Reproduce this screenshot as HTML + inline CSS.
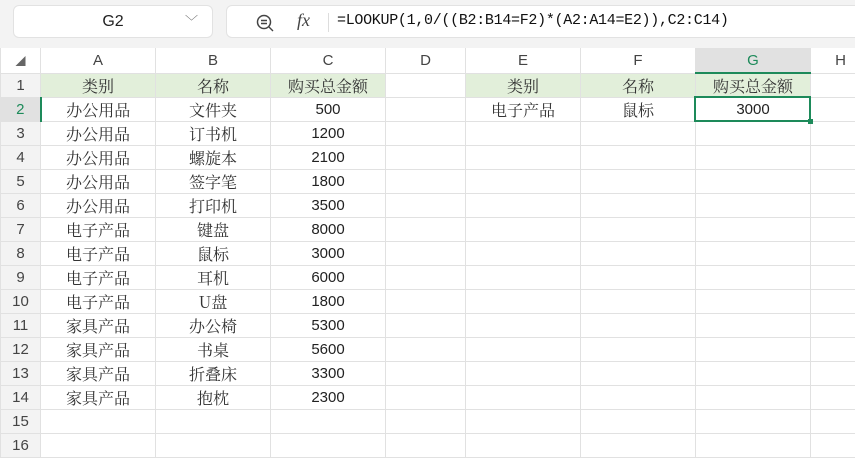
<!DOCTYPE html><html><head><meta charset="utf-8"><style>
body{margin:0;width:855px;height:446px;overflow:hidden;background:#fff;font-family:"Liberation Sans","Noto Serif CJK SC",sans-serif;position:relative}
.tb{position:absolute;left:0;top:0;width:855px;height:48px;background:#f3f3f3}
.nb{position:absolute;left:13px;top:5px;width:200px;height:33px;background:#fff;border:1px solid #e2e2e2;border-radius:6px;box-sizing:border-box;font-size:16px;line-height:31px;text-align:center;color:#222}
.nb span{position:absolute;right:14px;top:0;color:#666;font-size:13px}
.fb{position:absolute;left:226px;top:5px;width:640px;height:33px;background:#fff;border:1px solid #e2e2e2;border-radius:6px;box-sizing:border-box}
.fx{position:absolute;left:70px;top:4px;font-family:"Liberation Serif",serif;font-style:italic;font-size:18px;color:#444}
.sep{position:absolute;left:101px;top:7px;width:1px;height:19px;background:#ddd}
.f{position:absolute;left:110px;top:6px;font-family:"Liberation Mono","Noto Sans CJK SC",monospace;font-size:15px;color:#111;letter-spacing:-0.3px}
table{position:absolute;left:0;top:48px;width:870px;border-collapse:collapse;table-layout:fixed}
td{border:1px solid #e1e1e1;height:23px;padding:0;text-align:center;font-size:15px;color:#222;white-space:nowrap;overflow:hidden}
td.cn{font-family:"Noto Serif CJK SC","Liberation Serif",serif;color:#333;font-size:16px}
tr.h td{height:24px;color:#444;font-size:15px;background:#fff;border-top:none}
td.r{background:#f3f3f3;color:#444;font-size:15px}
td.g{background:#e2efda}
tr.h td.sel{background:#e1e1e1;color:#1d8a5a;border-bottom:2px solid #1d8a5a}
td.rs{background:#e1e1e1;color:#1d8a5a;border-right:2px solid #1d8a5a}
.cur{position:absolute;left:694px;top:96px;width:117px;height:26px;border:2px solid #1d8a5a;box-sizing:border-box}
.cur i{position:absolute;right:-4px;bottom:-4px;width:5px;height:5px;background:#1d8a5a}
</style></head><body>
<div class="tb">
<div class="nb">G2<span>﹀</span></div>
<div class="fb">
<svg style="position:absolute;left:28px;top:7px" width="20" height="20" viewBox="0 0 20 20"><circle cx="9" cy="9" r="6.5" fill="none" stroke="#444" stroke-width="1.5"/><path d="M14 14l4 4M6 7.5h6M6 10.5h6" stroke="#444" stroke-width="1.4"/></svg>
<div class="fx">fx</div><div class="sep"></div>
<div class="f">=LOOKUP(1,0/((B2:B14=F2)*(A2:A14=E2)),C2:C14)</div>
</div></div>
<table>
<colgroup><col style="width:40px"><col style="width:115px"><col style="width:115px"><col style="width:115px"><col style="width:80px"><col style="width:115px"><col style="width:115px"><col style="width:115px"><col style="width:60px"></colgroup>
<tr class="h"><td class="r" style="font-size:10px;color:#666">◢</td><td>A</td><td>B</td><td>C</td><td>D</td><td>E</td><td>F</td><td class="sel">G</td><td>H</td></tr>
<tr><td class="r">1</td><td class="g cn">类别</td><td class="g cn">名称</td><td class="g cn">购买总金额</td><td></td><td class="g cn">类别</td><td class="g cn">名称</td><td class="g cn">购买总金额</td><td></td></tr>
<tr><td class="r rs">2</td><td class="cn">办公用品</td><td class="cn">文件夹</td><td>500</td><td></td><td class="cn">电子产品</td><td class="cn">鼠标</td><td>3000</td><td></td></tr>
<tr><td class="r">3</td><td class="cn">办公用品</td><td class="cn">订书机</td><td>1200</td><td></td><td></td><td></td><td></td><td></td></tr>
<tr><td class="r">4</td><td class="cn">办公用品</td><td class="cn">螺旋本</td><td>2100</td><td></td><td></td><td></td><td></td><td></td></tr>
<tr><td class="r">5</td><td class="cn">办公用品</td><td class="cn">签字笔</td><td>1800</td><td></td><td></td><td></td><td></td><td></td></tr>
<tr><td class="r">6</td><td class="cn">办公用品</td><td class="cn">打印机</td><td>3500</td><td></td><td></td><td></td><td></td><td></td></tr>
<tr><td class="r">7</td><td class="cn">电子产品</td><td class="cn">键盘</td><td>8000</td><td></td><td></td><td></td><td></td><td></td></tr>
<tr><td class="r">8</td><td class="cn">电子产品</td><td class="cn">鼠标</td><td>3000</td><td></td><td></td><td></td><td></td><td></td></tr>
<tr><td class="r">9</td><td class="cn">电子产品</td><td class="cn">耳机</td><td>6000</td><td></td><td></td><td></td><td></td><td></td></tr>
<tr><td class="r">10</td><td class="cn">电子产品</td><td class="cn">U盘</td><td>1800</td><td></td><td></td><td></td><td></td><td></td></tr>
<tr><td class="r">11</td><td class="cn">家具产品</td><td class="cn">办公椅</td><td>5300</td><td></td><td></td><td></td><td></td><td></td></tr>
<tr><td class="r">12</td><td class="cn">家具产品</td><td class="cn">书桌</td><td>5600</td><td></td><td></td><td></td><td></td><td></td></tr>
<tr><td class="r">13</td><td class="cn">家具产品</td><td class="cn">折叠床</td><td>3300</td><td></td><td></td><td></td><td></td><td></td></tr>
<tr><td class="r">14</td><td class="cn">家具产品</td><td class="cn">抱枕</td><td>2300</td><td></td><td></td><td></td><td></td><td></td></tr>
<tr><td class="r">15</td><td></td><td></td><td></td><td></td><td></td><td></td><td></td><td></td></tr>
<tr><td class="r">16</td><td></td><td></td><td></td><td></td><td></td><td></td><td></td><td></td></tr>
</table>
<div class="cur"><i></i></div>
</body></html>
